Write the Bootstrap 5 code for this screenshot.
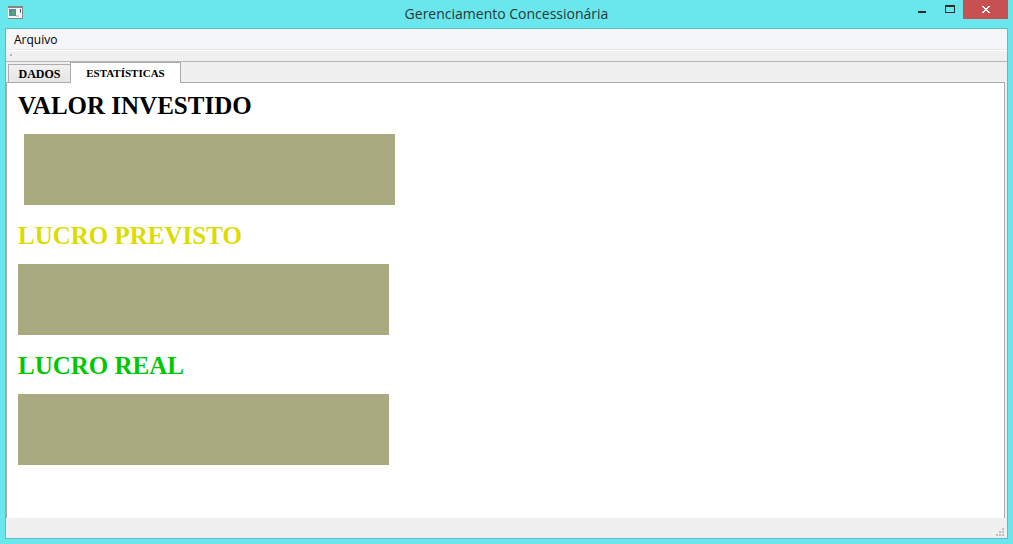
<!DOCTYPE html>
<html lang="pt-BR">
<head>
<meta charset="utf-8">
<meta name="viewport" content="width=device-width, initial-scale=1">
<title>Gerenciamento Concessionária</title>
<link href="https://cdn.jsdelivr.net/npm/bootstrap@5.3.0/dist/css/bootstrap.min.css" rel="stylesheet">
<style>
  body { background: #6ae7ec; font-family: "Open Sans", "Noto Sans", sans-serif; color: #000; }
  .window-frame { padding: 0 5px 5px; }
  .title-bar { height: 28px; }
  .app-icon { left: 3px; top: 6px; }
  .window-title { font-size: 14px; line-height: 28px; color: #24383a; }
  .window-controls { right: 0; top: 0; }
  .window-controls button { height: 19px; width: 27px; background: none; }
  .window-controls .btn-shut { width: 45px; background: #c75050; }
  .client { border: 1px solid #5cbcc1; background: #f0f0f0; }
  .menu-strip { height: 22px; background: #f5f6f7; border-bottom: 1px solid #fff; box-shadow: inset 0 -1px #e6e6e6; }
  .menu-strip button { font-size: 12px; line-height: 20px; padding: 0 8px; }
  .tool-strip { height: 11px; border-bottom: 1px solid #b4b4b4; }
  .grip-dot { width: 2px; height: 2px; margin: 3px 4px; background: #b8b8b8; }
  .page-tabs { height: 21px; padding-left: 2px; border: 0; font-family: "Liberation Serif", serif; }
  .page-tabs .nav-link { border: 1px solid #acacac; border-radius: 0; color: #000; font-weight: 700; padding: 0; margin: 0; }
  .page-tabs .tab-dados { width: 63px; height: 19px; border-bottom: 0; font-size: 12px; line-height: 18px; background: linear-gradient(#f0f0f0, #e5e5e5); }
  .page-tabs .tab-stats { width: 111px; height: 21px; margin-left: -1px; border-bottom: 0; font-size: 11px; line-height: 20px; }
  .page-tabs .nav-link.active { color: #000; background: #fff; border-color: #acacac; z-index: 1; }
  .page-tabs .nav-item { display: flex; align-items: flex-end; }
  .stats-pane { margin: -1px 2px 0 0; padding: 8px 11px; background: #fff; border: 1px solid #acacac; border-bottom: 0; }
  .stats-pane h2 { margin: 0; height: 43px; font: 700 25px/30px "Liberation Serif", serif; }
  .stat-box { display: block; width: 371px; max-width: 100%; height: 71px; margin-bottom: 16px; background: #a9aa7f; }
  .inset-box { margin-left: 6px; }
  .c-previsto { color: #dcdc00; }
  .c-real { color: #00c800; }
  .status-strip { height: 20px; padding: 0 3px 2px 0; }
</style>
</head>
<body>
<div class="window-frame d-flex flex-column min-vh-100">
  <header class="title-bar position-relative text-center">
    <svg class="app-icon position-absolute" width="15" height="13" viewBox="0 0 15 13" aria-hidden="true">
      <path fill="#858585" d="M0 0h15v13H0z"/><path fill="#f6f6f6" d="M0 2h14v10H0z"/>
      <path fill="#5b87a5" d="M1 3h7v7H1z"/><path fill="#4da578" d="M2 7l5-3v5H2z"/>
      <path fill="#d0d0d0" d="M8 9h3v2H8z"/><path fill="#2856a5" d="M12 3h1v3h-1z"/><path fill="#4da54d" d="M12 6h1v1h-1z"/>
    </svg>
    <h1 class="window-title m-0 fw-normal">Gerenciamento Concessionária</h1>
    <div class="window-controls position-absolute d-flex">
      <button type="button" class="border-0 p-0 d-flex" aria-label="Minimizar"><svg width="27" height="19"><path fill="#2a2a2a" d="M9 11h8v2H9z"/></svg></button>
      <button type="button" class="border-0 p-0 d-flex" aria-label="Maximizar"><svg width="27" height="19"><path fill="#2a2a2a" fill-rule="evenodd" d="M9 5h10v8H9zM10 7v5h8V7z"/></svg></button>
      <button type="button" class="btn-shut border-0 p-0 d-flex" aria-label="Fechar"><svg width="45" height="19" shape-rendering="crispEdges"><path fill="#fff" d="M19 6h2v1h1v1h2V7h1V6h2v1h-1v1h-1v1h-1v1h1v1h1v1h1v1h-2v-1h-1v-1h-2v1h-1v1h-2v-1h1v-1h1v-1h1V9h-1V8h-1V7h-1z"/></svg></button>
    </div>
  </header>
  <div class="client d-flex flex-column flex-grow-1">
    <nav class="menu-strip d-flex" aria-label="Menu">
      <button type="button" class="border-0 bg-transparent">Arquivo</button>
    </nav>
    <div class="tool-strip d-flex"><span class="grip-dot"></span></div>
    <ul class="page-tabs nav nav-tabs" role="tablist">
      <li class="nav-item" role="presentation"><button type="button" class="nav-link tab-dados" role="tab" aria-selected="false">DADOS</button></li>
      <li class="nav-item" role="presentation"><button type="button" class="nav-link tab-stats active position-relative" id="stats-tab" role="tab" aria-selected="true" aria-controls="stats">ESTATÍSTICAS</button></li>
    </ul>
    <main class="stats-pane flex-grow-1" id="stats" role="tabpanel" aria-labelledby="stats-tab">
      <h2 id="investido">VALOR INVESTIDO</h2>
      <output class="stat-box inset-box" aria-labelledby="investido"></output>
      <h2 id="previsto" class="c-previsto">LUCRO PREVISTO</h2>
      <output class="stat-box" aria-labelledby="previsto"></output>
      <h2 id="real" class="c-real">LUCRO REAL</h2>
      <output class="stat-box" aria-labelledby="real"></output>
    </main>
    <footer class="status-strip d-flex justify-content-end align-items-end">
      <svg width="8" height="8" aria-hidden="true"><path fill="#bfbfbf" d="M6 0h2v2H6zM3 3h2v2H3zM6 3h2v2H6zM0 6h2v2H0zM3 6h2v2H3zM6 6h2v2H6z"/></svg>
    </footer>
  </div>
</div>
<script src="https://cdn.jsdelivr.net/npm/bootstrap@5.3.0/dist/js/bootstrap.bundle.min.js"></script>
</body>
</html>
